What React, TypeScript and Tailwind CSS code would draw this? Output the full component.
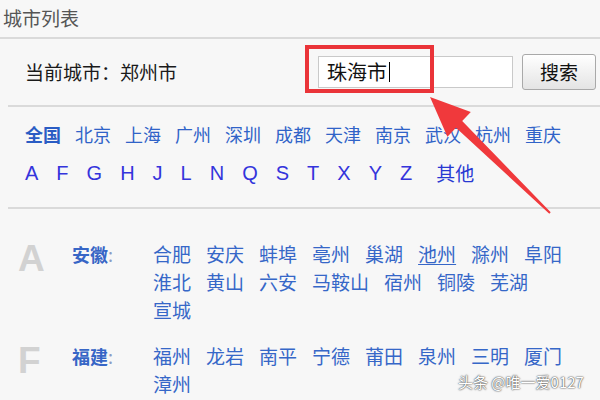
import React from 'react';

const hotCities = ['北京', '上海', '广州', '深圳', '成都', '天津', '南京', '武汉', '杭州', '重庆'];
const letters = ['A', 'F', 'G', 'H', 'J', 'L', 'N', 'Q', 'S', 'T', 'X', 'Y', 'Z'];

const provinces = [
  {
    letter: 'A',
    name: '安徽',
    cities: ['合肥', '安庆', '蚌埠', '亳州', '巢湖', '池州', '滁州', '阜阳', '淮北', '黄山', '六安', '马鞍山', '宿州', '铜陵', '芜湖', '宣城'],
  },
  {
    letter: 'F',
    name: '福建',
    cities: ['福州', '龙岩', '南平', '宁德', '莆田', '泉州', '三明', '厦门', '漳州'],
  },
];

const Divider = ({ inset }: { inset?: boolean }) => (
  <div className={`h-[2px] bg-[#dadada] ${inset ? 'ml-[8px]' : ''}`} />
);

export default function App() {
  return (
    <div className="relative w-[600px] h-[400px] overflow-hidden bg-[#f7f7f7] font-['Noto_Sans_CJK_SC',sans-serif]">
      <div className="h-[37px] flex items-center pl-[3px] text-[19px] text-[#555]">城市列表</div>
      <Divider />

      <div className="h-[66px] flex items-center pl-[25px]">
        <span className="text-[19px] text-[#1a1a1a]">当前城市：郑州市</span>
        <div className="relative ml-[141px]">
          <div className="w-[195px] h-[32px] bg-white border border-[#c9c9c9] flex items-center pl-[8px] text-[20px] text-[#111]">
            珠海市
            <span className="w-[1px] h-[20px] bg-black ml-[2px]" />
          </div>
          <div className="absolute left-[-13px] top-[-11px] w-[129px] h-[48px] border-4 border-[#ea3439]" />
        </div>
        <button className="ml-[9px] w-[74px] h-[36px] rounded-[3px] border border-[#a9a9a9] bg-linear-to-b from-white to-[#e4e4e4] text-[19px] text-[#111]">
          搜索
        </button>
      </div>
      <Divider inset />

      <div className="pl-[25px] pt-[13px] pb-[20px] flex flex-col gap-[11px]">
        <div className="flex gap-[14px] text-[18px] leading-[28px] text-[#3063c8]">
          <span className="font-bold text-[#2a5cc4]">全国</span>
          {hotCities.map((c) => (
            <span key={c}>{c}</span>
          ))}
        </div>
        <div className="flex items-center gap-[18px] h-[28px] text-[20px] text-[#3434dc] font-['Liberation_Sans','Noto_Sans_CJK_SC',sans-serif]">
          {letters.map((l) => (
            <span key={l}>{l}</span>
          ))}
          <span className="ml-[6px] text-[19px] text-[#2838d2] font-['Noto_Sans_CJK_SC',sans-serif]">其他</span>
        </div>
      </div>
      <Divider inset />

      <div className="pt-[31px] pl-[18px] flex flex-col gap-[18px]">
        {provinces.map((p) => (
          <div key={p.letter} className="flex">
            <div className="w-[52px] text-[37px] leading-none font-bold text-[#d2d2d2] font-['Liberation_Sans',sans-serif]">
              {p.letter}
            </div>
            <div className="w-[83px] pl-[2px] text-[18px] leading-[28px] font-bold text-[#3766c6]">
              {p.name}
              <span className="font-normal text-[#8a9cc4]">:</span>
            </div>
            <div className="w-[420px] flex flex-wrap gap-x-[15px] text-[19px] leading-[28px] text-[#3667c8]">
              {p.cities.map((c) => (
                <span key={c} className={c === '池州' ? 'underline underline-offset-2' : ''}>
                  {c}
                </span>
              ))}
            </div>
          </div>
        ))}
      </div>

      <svg className="absolute inset-0 pointer-events-none" width="600" height="400" viewBox="0 0 600 400">
        <polygon
          points="430,97 470.8,112 462.2,121.1 550.7,212.3 549.3,213.7 456,127.7 447.4,136.8"
          fill="#f0393c"
        />
      </svg>

      <div className="absolute left-[458px] top-[371px] text-[15px] text-white [text-shadow:0_0_2px_#444,0_0_1px_#444]">
        头条 @唯一爱0127
      </div>
    </div>
  );
}
